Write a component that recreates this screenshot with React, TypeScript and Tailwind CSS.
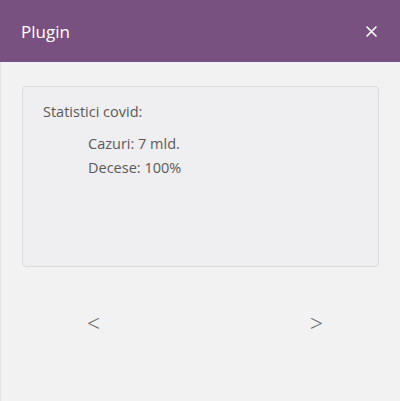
export default function App() {
  return (
    <div className="flex h-[401px] w-[400px] flex-col bg-[#f2f2f2] font-['Open_Sans',sans-serif]">
      <header className="flex h-[62px] shrink-0 items-center justify-between bg-[#785180] pl-[21px] pr-[23px] text-white">
        <h1 className="text-[17px] leading-none">Plugin</h1>
        <button className="text-white">
          <svg width="11" height="11" viewBox="0 0 11 11" stroke="currentColor" strokeWidth="1.6" strokeLinecap="round">
            <path d="M1 1l9 9M10 1l-9 9" />
          </svg>
        </button>
      </header>
      <main className="flex-1 border-l border-[#e4e4e4] px-[21px] pt-[24px]">
        <section className="h-[181px] rounded-[4px] border border-[#dcdbde] bg-[#efeef0] px-[20px] pt-[13px] text-[14.5px] text-[#5a5a5a]">
          <p className="leading-[24px]">Statistici covid:</p>
          <div className="mt-[8px] pl-[45px] leading-[24px]">
            <p>Cazuri: 7 mld.</p>
            <p>Decese: 100%</p>
          </div>
        </section>
        <nav className="mt-[45px] flex justify-between pl-[65px] pr-[56px] text-[23px] font-light leading-none text-[#666]">
          <button>&lt;</button>
          <button>&gt;</button>
        </nav>
      </main>
    </div>
  );
}
